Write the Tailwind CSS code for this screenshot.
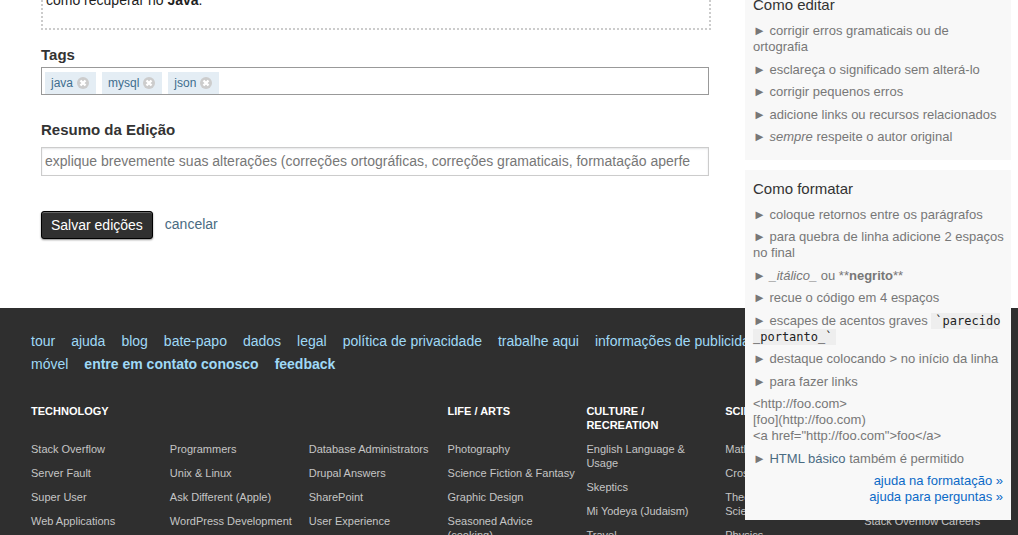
<!DOCTYPE html>
<html lang="pt">
<head>
<meta charset="utf-8">
<meta name="viewport" content="width=device-width, initial-scale=1">
<title>Editar pergunta</title>
<script src="https://cdn.jsdelivr.net/npm/@tailwindcss/browser@4"></script>
</head>
<body class="bg-white font-['Liberation_Sans',Arial,sans-serif] text-[#333]">
<div class="relative h-screen overflow-hidden">

  <main class="flex items-start gap-9 pl-[41px] pr-[7px]">
    <form class="min-w-0 flex-1 pb-[69px]">
      <div class="-mt-2 -mr-0.5 h-[38px] border-2 border-t-0 border-dotted border-[#ccc] pl-[3px] text-[14px] leading-4 text-[#222]">como recuperar no <b>Java</b>.</div>

      <label for="tags" class="mt-4 block text-[15px] leading-[18px] font-bold">Tags</label>
      <div class="mt-[3px] flex h-7 items-end gap-1.5 border border-[#999] pl-[3px] text-[12px] text-[#3e6d8e]">
        <span class="flex h-[22px] items-center gap-1 bg-[#e4edf4] pr-[7px] pl-1.5">java <button type="button" aria-label="remover java"><svg class="block size-3" viewBox="0 0 12 12"><circle cx="6" cy="6" r="6" fill="#ccc"/><path d="M3.5 3.5l5 5M8.5 3.5l-5 5" stroke="#fff" stroke-width="2.4"/></svg></button></span>
        <span class="flex h-[22px] items-center gap-1 bg-[#e4edf4] pr-[7px] pl-1.5">mysql <button type="button" aria-label="remover mysql"><svg class="block size-3" viewBox="0 0 12 12"><circle cx="6" cy="6" r="6" fill="#ccc"/><path d="M3.5 3.5l5 5M8.5 3.5l-5 5" stroke="#fff" stroke-width="2.4"/></svg></button></span>
        <span class="flex h-[22px] items-center gap-1 bg-[#e4edf4] pr-[7px] pl-1.5">json <button type="button" aria-label="remover json"><svg class="block size-3" viewBox="0 0 12 12"><circle cx="6" cy="6" r="6" fill="#ccc"/><path d="M3.5 3.5l5 5M8.5 3.5l-5 5" stroke="#fff" stroke-width="2.4"/></svg></button></span>
        <input id="tags" type="text" class="h-full min-w-0 flex-1 outline-none">
      </div>

      <label for="resumo" class="mt-[26px] block text-[15px] leading-[18px] font-bold">Resumo da Edição</label>
      <input id="resumo" type="text" placeholder="explique brevemente suas alterações (correções ortográficas, correções gramaticais, formatação aperfe" class="mt-2 block h-[29px] w-full border border-[#ccc] px-[3px] pb-0.5 text-[14px] shadow-[inset_0_1px_2px_#e4e5e7] outline-none placeholder:text-[#777]">

      <div class="mt-[35px] flex items-center gap-3 text-[14px]">
        <button type="submit" class="h-7 rounded-[3px] border border-black bg-[#303030] px-[9px] text-white shadow-[inset_0_1px_0_#666,0_1px_2px_#888]">Salvar edições</button>
        <a href="#" class="pb-0.5 text-[#4a6b82]">cancelar</a>
      </div>
    </form>

    <!-- reserves the sidebar's column; the sidebar itself overlaps the footer -->
    <div class="relative w-[266px] shrink-0">
      <aside class="absolute inset-x-0 top-0 z-10 -mt-3 flex flex-col gap-2.5 text-[13px] leading-4 text-[#777]">
        <section class="bg-[#f8f8f8] px-2 pt-[7px] pb-2 [&>p]:mb-1.5 [&>p:nth-child(even)]:mb-[7px]">
          <h4 class="mb-2 text-[15px] leading-5 text-[#333]">Como editar</h4>
          <p>► corrigir erros gramaticais ou de ortografia</p>
          <p>► esclareça o significado sem alterá-lo</p>
          <p>► corrigir pequenos erros</p>
          <p>► adicione links ou recursos relacionados</p>
          <p>► <i>sempre</i> respeite o autor original</p>
        </section>
        <section class="bg-[#f8f8f8] px-2 pt-[9px] pb-[15px] [&>p]:mb-1.5 [&>p:nth-child(odd)]:mb-[7px]">
          <h4 class="mb-2 text-[15px] leading-5 text-[#333]">Como formatar</h4>
          <p>► coloque retornos entre os parágrafos</p>
          <p class="-mr-2">► para quebra de linha adicione 2 espaços no final</p>
          <p>► <i>_itálico_</i> ou **<b>negrito</b>**</p>
          <p>► recue o código em 4 espaços</p>
          <p>► escapes de acentos graves <code class="bg-[#eee] py-px pr-1 pl-1 font-['DejaVu_Sans_Mono',monospace] text-[12px] text-[#222]">`parecido<br>_portanto_`</code></p>
          <p>► destaque colocando &gt; no início da linha</p>
          <p>► para fazer links</p>
          <p>&lt;http://foo.com&gt;<br>[foo](http://foo.com)<br>&lt;a href="http://foo.com"&gt;foo&lt;/a&gt;</p>
          <p>► <a href="#" class="text-[#4a6b82]">HTML básico</a> também é permitido</p>
          <div class="flex flex-col items-end text-[#0c6ac7]">
            <a href="#">ajuda na formatação »</a>
            <a href="#">ajuda para perguntas »</a>
          </div>
        </section>
      </aside>
    </div>
  </main>

  <footer class="min-h-[300px] bg-[#2f2f2f] pt-[22px] pr-[15px] pl-[31px]">
    <nav class="flex max-w-[750px] flex-wrap gap-x-4 text-[14px] leading-[23px] text-[#9fd9f6]">
      <a href="#">tour</a><a href="#">ajuda</a><a href="#">blog</a><a href="#">bate-papo</a><a href="#">dados</a><a href="#">legal</a><a href="#">política de privacidade</a><a href="#">trabalhe aqui</a><a href="#">informações de publicidade</a><a href="#">móvel</a><a href="#" class="font-bold">entre em contato conosco</a><a href="#" class="font-bold">feedback</a>
    </nav>
    <div class="mt-7 grid grid-cols-7 text-[11px] leading-[14px] text-[#c5c5c5] [&>h5]:h-[38px] [&>h5]:font-bold [&>h5]:text-white [&>ul]:space-y-2.5 [&>ul]:pr-3">
      <h5 class="col-span-3">TECHNOLOGY</h5>
      <h5>LIFE / ARTS</h5>
      <h5 class="pr-8">CULTURE / RECREATION</h5>
      <h5>SCIENCE</h5>
      <h5>OTHER</h5>
      <ul class="whitespace-nowrap"><li><a href="#">Stack Overflow</a></li><li><a href="#">Server Fault</a></li><li><a href="#">Super User</a></li><li><a href="#">Web Applications</a></li></ul>
      <ul class="whitespace-nowrap"><li><a href="#">Programmers</a></li><li><a href="#">Unix &amp; Linux</a></li><li><a href="#">Ask Different (Apple)</a></li><li><a href="#">WordPress Development</a></li></ul>
      <ul class="whitespace-nowrap"><li><a href="#">Database Administrators</a></li><li><a href="#">Drupal Answers</a></li><li><a href="#">SharePoint</a></li><li><a href="#">User Experience</a></li></ul>
      <ul><li><a href="#">Photography</a></li><li class="whitespace-nowrap"><a href="#">Science Fiction &amp; Fantasy</a></li><li><a href="#">Graphic Design</a></li><li><a href="#">Seasoned Advice<br>(cooking)</a></li></ul>
      <ul><li><a href="#">English Language &amp; Usage</a></li><li><a href="#">Skeptics</a></li><li><a href="#">Mi Yodeya (Judaism)</a></li><li><a href="#">Travel</a></li></ul>
      <ul><li><a href="#">Mathematics</a></li><li><a href="#">Cross Validated</a></li><li><a href="#">Theoretical Computer Science</a></li><li><a href="#">Physics</a></li></ul>
      <ul class="whitespace-nowrap"><li><a href="#">Stack Apps</a></li><li><a href="#">Meta Stack Exchange</a></li><li><a href="#">Area 51</a></li><li><a href="#">Stack Overflow Careers</a></li></ul>
    </div>
  </footer>
</div>
</body>
</html>
